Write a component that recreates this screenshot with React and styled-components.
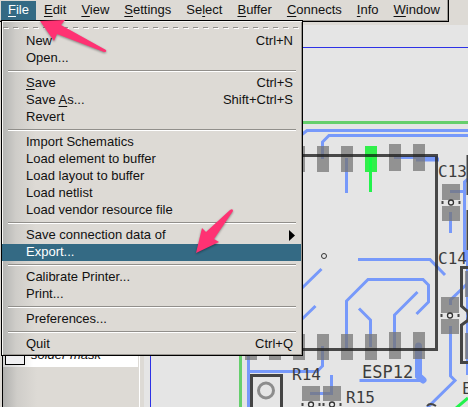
import React from "react";
import styled, { createGlobalStyle } from "styled-components";

const Global = createGlobalStyle`
  * { box-sizing: border-box; }
  body { margin: 0; background: #dddad5; color: #111; font-family: "Liberation Sans", Arial, sans-serif; font-size: 13px; overflow: hidden; }
  button, input { font: inherit; color: inherit; margin: 0; padding: 0; border: 0; background: none; }
`;

const Window = styled.div`
  position: relative;
  display: flex;
  flex-direction: column;
  min-height: 100vh;
`;
const Header = styled.header`
  display: flex;
  height: 25px;
  align-items: flex-start;
`;
const MenuBar = styled.nav`
  position: relative;
  display: flex;
  gap: 1px;
  height: 22px;
  padding: 1px 1px 0 1px;
  border-right: 1px solid #000;
  border-bottom: 1px solid #000;
  box-shadow: inset -1px -1px #9b9893;
`;
const BarButton = styled.button`
  display: flex;
  align-items: flex-start;
  height: 19px;
  padding: 0 7px;
  line-height: 17px;
  white-space: nowrap;
  color: ${(p) => (p.$open ? "#fff" : "#111")};
  background: ${(p) => (p.$open ? "#346a84" : "transparent")};
`;
const Key = styled.span`
  text-decoration: underline;
  text-decoration-thickness: 1px;
  text-underline-offset: 2px;
`;
const Menu = styled.div`
  position: absolute;
  z-index: 2;
  top: 20px;
  left: 1px;
  width: 302px;
  padding-bottom: 2px;
  border: 1px solid #000;
  background: linear-gradient(90deg, #b3b4b2 0, #cfcdc9 14px, #dddad5 34px);
  box-shadow: inset 1px 1px #f8f7f4, inset -1px -1px #9b9893;
`;
const TearOff = styled.div`
  height: 12px;
  padding-top: 6px;
  &::before {
    content: "";
    display: block;
    height: 2px;
    margin: 0 3px 0 1px;
    background:
      repeating-linear-gradient(90deg, #918f8b 0 5px, transparent 5px 10px) 0 0 / 100% 1px no-repeat,
      repeating-linear-gradient(90deg, #fff 0 5px, transparent 5px 10px) 1px 1px / 100% 1px no-repeat;
  }
`;
const Separator = styled.hr`
  height: 2px;
  margin: 3px 6px;
  border: 0;
  border-top: 1px solid #918f8b;
  border-bottom: 1px solid #fff;
`;
const Item = styled.button`
  display: flex;
  justify-content: space-between;
  align-items: flex-start;
  width: calc(100% - 1px);
  height: 17px;
  padding: 0 8px 0 24px;
  line-height: 15px;
  white-space: nowrap;
  color: ${(p) => (p.$active ? "#fff" : "#111")};
  background: ${(p) => (p.$active ? "#346a84" : "transparent")};
`;
const SubArrow = styled.svg`
  align-self: center;
  width: 6px;
  height: 11px;
  margin-right: -2px;
`;
const Main = styled.main`
  display: flex;
  flex: 1;
`;
const Sidebar = styled.aside`
  flex: 0 0 144px;
  padding: 317px 4px 0 2px;
`;
const SideInner = styled.div`
  height: 100%;
  border-left: 1px solid #000;
  border-right: 1px solid #fff;
  background: linear-gradient(90deg, #b0b0ae 0, #cfcdc9 14px, #dddad5 34px);
`;
const Layer = styled.label`
  display: flex;
  align-items: center;
  gap: 6px;
  height: 25px;
  margin-right: 1px;
  padding-left: 2px;
  font-style: italic;
  line-height: 20px;
  background: linear-gradient(90deg, #d2d2d2 0, #fff 30px);
`;
const Check = styled.input`
  appearance: none;
  width: 20px;
  height: 20px;
  border: 1px solid #000;
  background: #f0f0f2;
`;
const Board = styled.section`
  flex: 1;
  min-width: 0;
  display: flex;
  overflow: hidden;
  background: #e5e5e5;
`;
const Drawing = styled.svg`
  flex: none;
  display: block;
  text {
    font-family: "DejaVu Sans Mono", monospace;
    fill: #3c3c3c;
  }
`;
const Pointers = styled.svg`
  position: absolute;
  z-index: 3;
  left: 0;
  top: 0;
  pointer-events: none;
  filter: drop-shadow(0 1px 1px rgba(0, 0, 0, 0.4));
`;

const bar = [["", "F", "ile"], ["", "E", "dit"], ["", "V", "iew"], ["", "S", "ettings"], ["Se", "l", "ect"], ["", "B", "uffer"], ["", "C", "onnects"], ["", "I", "nfo"], ["", "W", "indow"]];

const groups = [
  [{ t: ["New"], k: "Ctrl+N" }, { t: ["Open..."] }],
  [{ t: ["", "S", "ave"], k: "Ctrl+S" }, { t: ["Save ", "A", "s..."], k: "Shift+Ctrl+S" }, { t: ["Revert"] }],
  [{ t: ["Import Schematics"] }, { t: ["Load element to buffer"] }, { t: ["Load layout to buffer"] }, { t: ["Load netlist"] }, { t: ["Load vendor resource file"] }],
  [{ t: ["Save connection data of"], sub: true }, { t: ["Export..."], active: true }],
  [{ t: ["Calibrate Printer..."] }, { t: ["Print..."] }],
  [{ t: ["Preferences..."] }],
  [{ t: ["Quit"], k: "Ctrl+Q" }],
];

const Mnemonic = ({ parts: [a, key, b] }) => (
  <span>{a}{key && <Key>{key}</Key>}{b}</span>
);

const pads = [
  [293, 146, 12, 26], [317, 146, 12, 26], [341, 146, 12, 26], [389, 144, 12, 27], [413, 144, 12, 27],
  [245, 334, 12, 26], [269, 334, 12, 26], [293, 334, 12, 26], [317, 334, 12, 26], [341, 334, 12, 26], [365, 334, 12, 26],
  [389, 332, 12, 27], [413, 332, 12, 27],
  [442, 184, 18, 16], [442, 206, 18, 15], [441, 297, 18, 16], [441, 319, 18, 15],
  [302, 386, 18, 15], [323, 386, 18, 15], [465, 271, 12, 26], [465, 333, 12, 26],
];

const Via = ({ x, y }) => (
  <g>
    <circle cx={x} cy={y} r="2.5" fill="#eee" stroke="#333" strokeWidth="1.3" />
    <path d={`M${x - 8.5} ${y - 1.5}v3M${x + 8.5} ${y - 1.5}v3`} stroke="#444" strokeWidth="2" />
  </g>
);

function BoardDrawing() {
  return (
    <Drawing width="324" height="382" viewBox="144 25 324 382" role="img" aria-label="Circuit board">
      <path d="M468 47.5H150.5V407" fill="none" stroke="#2d32e6" />
      <path d="M468 122.5H240.5V407" fill="none" stroke="#65cf6c" strokeWidth="3" />
      <g fill="none" stroke="#7799fa" strokeWidth="3">
        <path d="M300 136L307 130.5H468M322.5 159V142L329 135.5H468M346.5 158V193" />
        <path d="M394 157.5H438M464 191.5H450M450.5 212V233M468 179L464.5 182V262" />
        <path d="M416 159.5H439" strokeWidth="4" />
        <path d="M358 259.5H430L445 275M300 290L321.5 269M300 321L315.5 306" />
        <path d="M346.5 349V301L368 279.5H423L428.5 285V302L416.5 314M417.5 292L394.5 315V349M359 308.5L370.5 320V347" />
        <path d="M248.5 350V407M248.5 371.5H317L322.5 366V346M310 393.5H332.5M331.5 395V375" />
        <path d="M359.5 380.5H420M450.5 305V300L468 283M450.5 326V376L455 380.5L427 408M467.5 250V375" />
        <path d="M418.5 346V376L423 380" strokeWidth="7" strokeLinecap="round" />
      </g>
      <rect x="365" y="146" width="12" height="26" fill="#31ef4b" />
      <path d="M370.5 158V192M455 409L468 398" stroke="#22f34c" strokeWidth="3" />
      <g fill="#757575" fillOpacity=".75">
        {pads.map(([x, y, w, h]) => <rect key={`${x}-${y}`} x={x} y={y} width={w} height={h} />)}
      </g>
      <path d="M240 155.5H436.5V349.5H240" fill="none" stroke="#202020" strokeOpacity=".8" strokeWidth="3" />
      <path d="M365 155.5H377" stroke="#13561d" strokeWidth="3" />
      <path d="M370.5 158V170" stroke="#12ff42" strokeWidth="3" />
      <g fill="none" stroke="#444" strokeWidth="3">
        <rect x="251.5" y="375.5" width="30" height="40" />
        <path d="M468 267.5H461.5V306L467 311M467 321L461.5 325V362.5H468" />
        <path d="M467 310Q470 316 467 322" />
        <path d="M467.5 155V195M467.5 210V250" strokeWidth="2" />
        <path d="M427 406Q430 402 436 406" strokeWidth="2" />
      </g>
      <circle cx="266" cy="390.5" r="7.5" fill="none" stroke="#8c8c8c" strokeWidth="3" />
      <circle cx="324" cy="256" r="2.5" fill="none" stroke="#333" />
      <Via x={451} y={202.5} />
      <Via x={450} y={315.5} />
      <Via x={311} y={404.5} />
      <Via x={332} y={404.5} />
      <g fontSize="16">
        <text x="438" y="177">C13</text>
        <text x="438" y="264">C14</text>
        <text x="292" y="380">R14</text>
        <text x="346" y="403">R15</text>
        <text x="462" y="394">E</text>
      </g>
      <text x="362" y="378" fontSize="17">ESP12</text>
    </Drawing>
  );
}

export default function App() {
  return (
    <Window>
      <Global />
      <Header>
        <MenuBar aria-label="Main menu">
          {bar.map((parts, i) => (
            <BarButton key={parts.join("")} $open={i === 0} aria-haspopup="menu" aria-expanded={i === 0}>
              <Mnemonic parts={parts} />
            </BarButton>
          ))}
          <Menu role="menu" aria-label="File">
            <TearOff />
            {groups.map((items, g) => (
              <React.Fragment key={g}>
                {g > 0 && <Separator />}
                {items.map((item) => (
                  <Item key={item.t.join("")} role="menuitem" $active={item.active}>
                    <Mnemonic parts={item.t} />
                    {item.k && <span>{item.k}</span>}
                    {item.sub && <SubArrow viewBox="0 0 6 11" aria-hidden="true"><path d="M0 0L6 5.5L0 11Z" fill="#000" /></SubArrow>}
                  </Item>
                ))}
              </React.Fragment>
            ))}
          </Menu>
        </MenuBar>
      </Header>
      <Main>
        <Sidebar>
          <SideInner>
            <Layer><Check type="checkbox" />solder mask</Layer>
          </SideInner>
        </Sidebar>
        <Board><BoardDrawing /></Board>
      </Main>
      <Pointers width="250" height="260" viewBox="0 0 250 260" aria-hidden="true">
        <path d="M40 21L65 20L61 25L106 50Q107 52 104 52L57 34L54 41Z" fill="#ff3273" />
        <path d="M196 253L202 228L206 232L230 210Q233 208 233 211L214 239L219 242Z" fill="#ff3273" />
      </Pointers>
    </Window>
  );
}
